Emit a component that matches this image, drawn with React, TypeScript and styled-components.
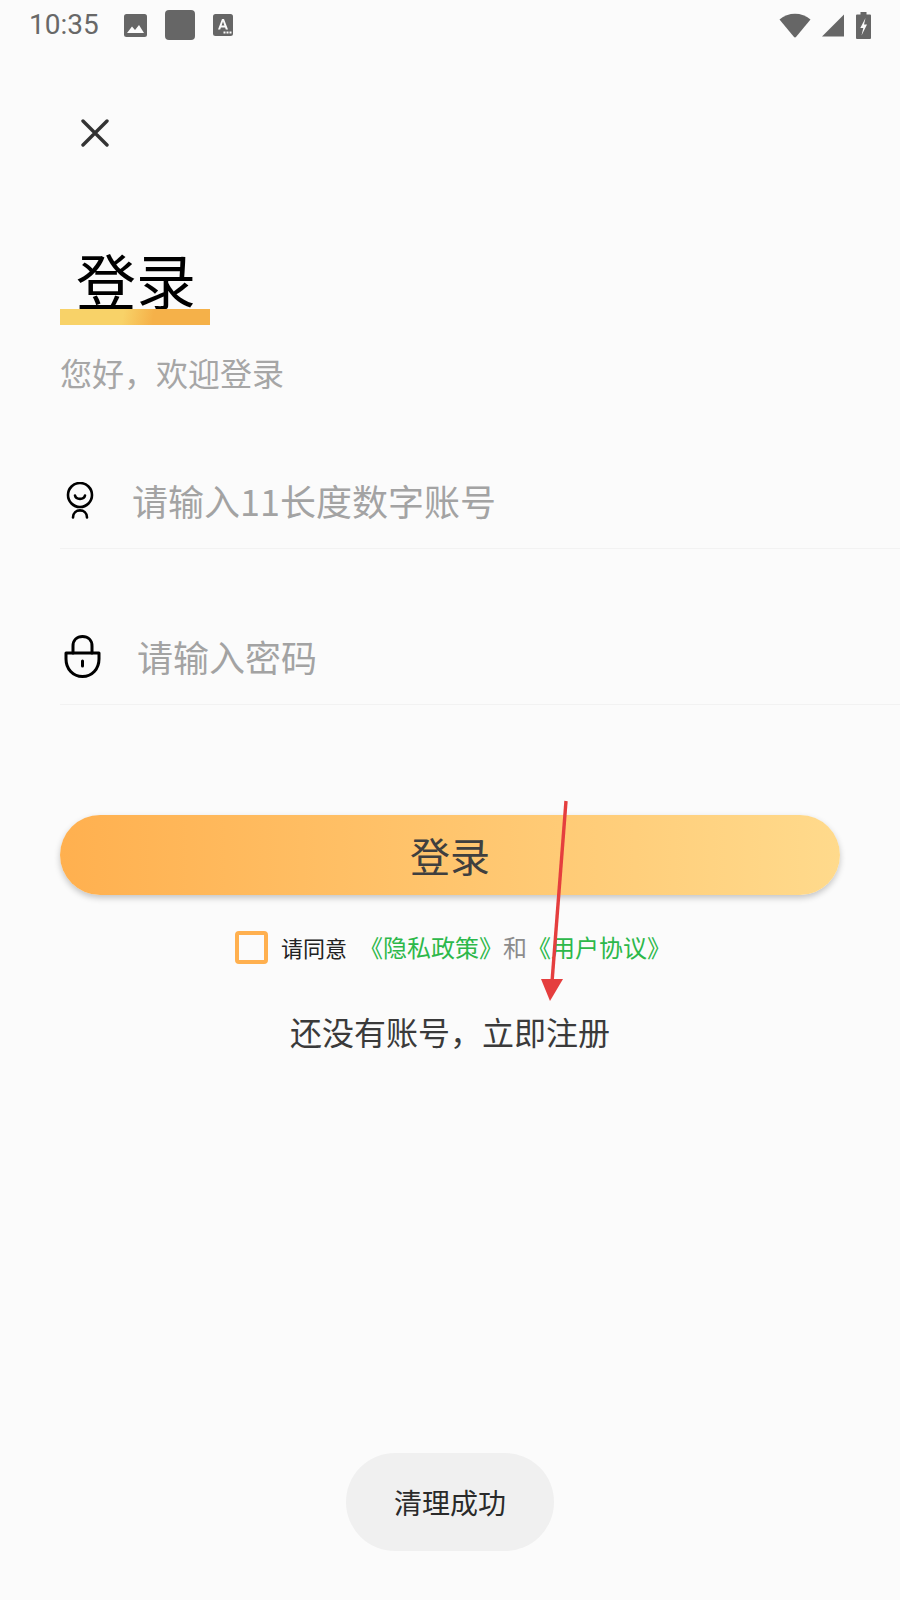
import React from "react";
import styled, { createGlobalStyle } from "styled-components";

const Global = createGlobalStyle`
  html, body { margin: 0; padding: 0; background: #fbfbfb; }
  * { box-sizing: border-box; }
`;

const CJK = `"Noto Sans CJK SC", "Noto Sans", sans-serif`;

const Page = styled.div`
  position: relative;
  width: 900px;
  height: 1600px;
  overflow: hidden;
  background: #fbfbfb;
  font-family: ${CJK};
`;

const StatusBar = styled.div`
  display: flex;
  align-items: center;
  height: 50px;
  padding: 0 0 0 29px;
  color: #666;
`;

const Clock = styled.span`
  font-family: Roboto, sans-serif;
  font-size: 28px;
  line-height: 50px;
  width: 95px;
  color: #686868;
`;

const Notifications = styled.div`
  display: flex;
  align-items: center;
  gap: 18px;
`;

const StatusRight = styled.div`
  display: flex;
  align-items: center;
  gap: 11px;
  margin-left: auto;
  padding-right: 29px;
`;

const Content = styled.div`
  display: flex;
  flex-direction: column;
  padding-left: 60px;
`;

const CloseButton = styled.div`
  display: flex;
  width: 28px;
  height: 28px;
  margin: 69px 0 102px 21px;
  color: #333;
`;

const TitleBlock = styled.div`
  display: flex;
  flex-direction: column;
  width: 150px;
`;

const Title = styled.h1`
  margin: 0;
  padding-left: 16px;
  font-size: 60px;
  line-height: 60px;
  font-weight: 400;
  color: #000;
  white-space: nowrap;
`;

const TitleBar = styled.div`
  height: 16px;
  background: linear-gradient(100deg, #f8d268 0%, #f8d268 42%, #f5b149 62%, #f5b149 100%);
`;

const Subtitle = styled.div`
  margin-top: 28px;
  font-size: 32px;
  line-height: 38px;
  color: #a6a6a6;
`;

const Field = styled.div<{ $top: number; $gap: number; $pad: number }>`
  display: flex;
  align-items: center;
  height: ${(p) => 37 + 30}px;
  margin-top: ${(p) => p.$top}px;
  padding-left: ${(p) => p.$pad}px;
  padding-bottom: 30px;
  gap: ${(p) => p.$gap}px;
  border-bottom: 1px solid #f2f2f2;
`;

const Placeholder = styled.span`
  font-size: 36px;
  line-height: 36px;
  color: #a3a3a3;
  white-space: nowrap;
`;

const LoginButton = styled.div`
  display: flex;
  align-items: center;
  justify-content: center;
  width: 780px;
  height: 80px;
  margin-top: 110px;
  border-radius: 40px;
  background: linear-gradient(90deg, #ffb04f 0%, #ffda8c 100%);
  box-shadow: 0 3px 6px rgba(0, 0, 0, 0.22);
  font-size: 40px;
  color: #3f3f3f;
`;

const Agreement = styled.div`
  display: flex;
  align-items: center;
  height: 32px;
  margin: 36px 0 0 175px;
  white-space: nowrap;
`;

const CheckBox = styled.span`
  width: 33px;
  height: 33px;
  margin-right: 13px;
  border: 4px solid #ffb04f;
  border-radius: 4px;
`;

const AgreeText = styled.span<{ $tone: "dark" | "green" | "grey" }>`
  font-size: ${(p) => (p.$tone === "dark" ? 22 : 24)}px;
  line-height: 32px;
  color: ${(p) => (p.$tone === "dark" ? "#222" : p.$tone === "green" ? "#2db84a" : "#8c8c8c")};
  margin-left: ${(p) => (p.$tone === "green" ? 0 : 0)}px;
`;

const Spacer = styled.span`
  width: 12px;
`;

const RegisterLink = styled.div`
  width: 780px;
  margin-top: 48px;
  font-size: 32px;
  line-height: 40px;
  text-align: center;
  color: #3a3a3a;
`;

const Toast = styled.div`
  display: flex;
  align-items: center;
  justify-content: center;
  align-self: flex-start;
  width: 208px;
  height: 98px;
  margin: 402px 0 0 286px;
  border-radius: 49px;
  background: #f0f0f0;
  font-size: 28px;
  color: #2a2a2a;
`;

const ArrowOverlay = styled.svg`
  position: absolute;
  left: 0;
  top: 0;
  pointer-events: none;
`;

const ImageIcon = () => (
  <svg width="23" height="23" viewBox="0 0 23 23">
    <rect x="0" y="0" width="23" height="23" rx="2.5" fill="#666" />
    <path d="M3 19 L8 12.5 L11 16 L15 11 L20 19 Z" fill="#fbfbfb" />
  </svg>
);

const BoxIcon = () => (
  <svg width="30" height="30" viewBox="0 0 30 30">
    <rect width="30" height="30" rx="4" fill="#666" />
  </svg>
);

const LetterIcon = () => (
  <svg width="20" height="22" viewBox="0 0 20 22">
    <rect width="20" height="22" rx="2.5" fill="#666" />
    <path d="M5 15.5 L9 5 H11 L15 15.5 H12.8 L12.1 13.4 H7.9 L7.2 15.5 Z M8.6 11.6 H11.4 L10 7.6 Z" fill="#fbfbfb" fillRule="evenodd" />
    <rect x="10.5" y="17.5" width="2" height="2" fill="#fbfbfb" />
    <rect x="13.5" y="17.5" width="2" height="2" fill="#fbfbfb" />
    <rect x="16.5" y="17.5" width="2" height="2" fill="#fbfbfb" />
  </svg>
);

const WifiIcon = () => (
  <svg width="32" height="25" viewBox="0 0 32 25">
    <path d="M0.5 6.5 C9 -1.2 23 -1.2 31.5 6.5 L17.2 23.8 C16.5 24.6 15.5 24.6 14.8 23.8 Z" fill="#666" />
  </svg>
);

const SignalIcon = () => (
  <svg width="23" height="23" viewBox="0 0 23 23">
    <path d="M0 22.5 L22 0.5 V22.5 Z" fill="#666" />
  </svg>
);

const BatteryIcon = () => (
  <svg width="15" height="27" viewBox="0 0 15 27">
    <path d="M4.5 0 H10.5 V2.5 H14 A1 1 0 0 1 15 3.5 V26 A1 1 0 0 1 14 27 H1 A1 1 0 0 1 0 26 V3.5 A1 1 0 0 1 1 2.5 H4.5 Z" fill="#666" />
    <path d="M9.5 6 L4.3 16 H7.3 L5.5 23.5 L11 12.5 H8 Z" fill="#fbfbfb" />
  </svg>
);

const CloseIcon = () => (
  <svg width="28" height="28" viewBox="0 0 28 28" fill="none" stroke="currentColor" strokeWidth="3.4" strokeLinecap="round">
    <path d="M2 2 L26 26 M26 2 L2 26" />
  </svg>
);

const UserIcon = () => (
  <svg width="28" height="37" viewBox="0 0 28 37" fill="none" stroke="#000" strokeWidth="2.6" strokeLinecap="round">
    <circle cx="14" cy="13" r="12" />
    <path d="M9 13.5 C10 18 18 18 19 13.5" />
    <path d="M7 35.5 C7 26 21 26 21 35.5" />
  </svg>
);

const LockIcon = () => (
  <svg width="37" height="43" viewBox="0 0 37 43" fill="none" stroke="#000" strokeWidth="3" strokeLinecap="round">
    <path d="M2 18 H35 V24 C35 34 28 41.5 18.5 41.5 C9 41.5 2 34 2 24 Z" strokeLinejoin="round" />
    <path d="M9 18 V11 C9 5 13 1.5 18.5 1.5 C24 1.5 28 5 28 11 V18" />
    <path d="M18.5 26 V31" />
  </svg>
);

export default function App() {
  return (
    <Page>
      <Global />
      <StatusBar>
        <Clock>10:35</Clock>
        <Notifications>
          <ImageIcon />
          <BoxIcon />
          <LetterIcon />
        </Notifications>
        <StatusRight>
          <WifiIcon />
          <SignalIcon />
          <BatteryIcon />
        </StatusRight>
      </StatusBar>
      <Content>
        <CloseButton>
          <CloseIcon />
        </CloseButton>
        <TitleBlock>
          <Title>登录</Title>
          <TitleBar />
        </TitleBlock>
        <Subtitle>您好，欢迎登录</Subtitle>
        <Field $top={91} $gap={38} $pad={6}>
          <UserIcon />
          <Placeholder>请输入11长度数字账号</Placeholder>
        </Field>
        <Field $top={89} $gap={36} $pad={4}>
          <LockIcon />
          <Placeholder>请输入密码</Placeholder>
        </Field>
        <LoginButton>登录</LoginButton>
        <Agreement>
          <CheckBox />
          <AgreeText $tone="dark">请同意</AgreeText>
          <Spacer />
          <AgreeText $tone="green">《隐私政策》</AgreeText>
          <AgreeText $tone="grey">和</AgreeText>
          <AgreeText $tone="green">《用户协议》</AgreeText>
        </Agreement>
        <RegisterLink>还没有账号，立即注册</RegisterLink>
        <Toast>清理成功</Toast>
      </Content>
      <ArrowOverlay width="900" height="1600" viewBox="0 0 900 1600">
        <line x1="566" y1="801" x2="552" y2="982" stroke="#e53e3e" strokeWidth="3.4" />
        <path d="M541 979 L563 979 L550 1001 Z" fill="#e53e3e" />
      </ArrowOverlay>
    </Page>
  );
}
